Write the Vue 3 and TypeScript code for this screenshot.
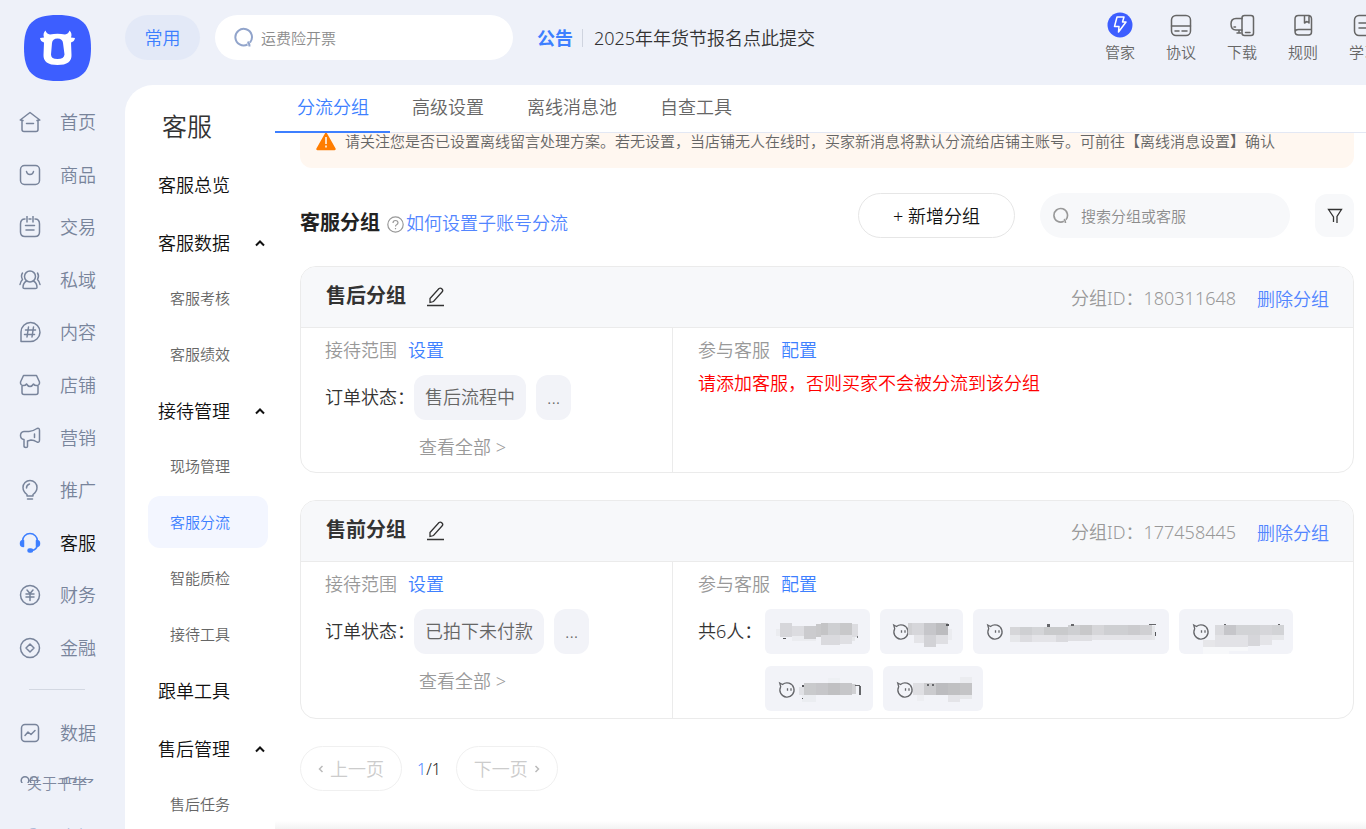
<script setup lang="ts">
import { ref } from 'vue'

interface NavItem { label: string; icon: string; active?: boolean }
interface SubGroup { label: string; collapsible?: boolean; children: string[] }
type Tile = [number, number, number, number, string]
interface Member { width: number; face: [number, number] | null; tiles: Tile[] }
interface Group { name: string; id: string; status: string; members: Member[] }

const navMain: NavItem[] = [
  { label: '首页', icon: '<path d="M4 9.5 1.2 9 11 1.5 20.800 9 18 9.500M3 9V18.500Q3 20.500 5 20.500H17Q19 20.500 19 18.500V9M7.500 12.500H14.500" />' },
  { label: '商品', icon: '<rect x="1.500" y="1.500" width="19" height="19" rx="4"/><path d="M7.500 7.500Q8 10.500 11 10.500T14.500 7.500"/>' },
  { label: '交易', icon: '<path d="M6 3Q1.500 3 1.500 8V16Q1.500 20.500 6 20.500H16Q20.500 20.500 20.500 16V8Q20.500 3 16 3M10 3H12M8 .5V6M14 .5V6M6.500 9.500H15.500M7 14H15" />' },
  { label: '私域', icon: '<circle cx="11" cy="7.500" r="5.500"/><path d="M7.500 12Q4 14 4 18.500 4 19.500 5.500 19.500H16.500Q18 19.500 18 18.500 18 14 14.500 12M3.500 4Q1.500 7 3.500 10.500 1.500 12.500 1 15.500M18.500 4Q20.500 7 18.500 10.500 20.500 12.500 21 15.500"/>' },
  { label: '内容', icon: '<path d="M2 20.500V11A9.500 9.500 0 1 1 11 20.500Z"/><path d="M9.500 6 8 16M14.500 6 13 16M6.500 9H16.500M5.500 13.500H15.500"/>' },
  { label: '店铺', icon: '<path d="M4.500 1.500H17.500L20.500 8Q20.800 11.500 17.500 11.500 15.500 11.500 14.500 10 13 12.500 11 12.500T7.500 10Q6.500 11.500 4.500 11.500 1.200 11.500 1.500 8ZM3 12V18.500Q3 20.500 5 20.500H17Q19 20.500 19 18.500V12"/>' },
  { label: '营销', icon: '<path d="M5 4.500H10Q13.500 4.500 18 1.500 20.500.5 20.500 3.500V13Q20.500 16 18 15 15 13 12 13L8.500 14V19.500Q8.500 20.500 7 20.500 5 20.500 5 19V12.500Q1.500 12 1.500 8.500T5 4.500ZM15.500 7V10.500"/>' },
  { label: '推广', icon: '<path d="M8 17V15.500Q4 12.500 4 8.500A7 7 0 0 1 18 8.500Q18 12.500 14 15.500V17ZM8.500 20H13.500M7.500 9Q7.500 6 10.500 5"/>' },
  { label: '客服', active: true, icon: '<path d="M3.500 9A7.500 7.500 0 0 1 18.500 9M18.500 13Q17.500 18 12.500 18.500" /><path fill="currentColor" d="M4.500 8.500V14.500Q1.500 14.500 1.500 11.500T4.500 8.500ZM17.500 8.500V14.500Q20.500 14.500 20.500 11.500T17.500 8.500Z"/><rect x="9" y="17" width="4.500" height="3" rx="1.500" fill="currentColor"/>' },
  { label: '财务', icon: '<circle cx="11" cy="11" r="9.500"/><path d="M8 6 11 9.500 14 6M7 10H15M7 13H15M11 9.500V16.500"/>' },
  { label: '金融', icon: '<circle cx="11" cy="11" r="9.500"/><path d="M11 7 15 11 11 15 7 11Z"/>' },
]
const navMore: NavItem[] = [
  { label: '数据', icon: '<rect x="2.500" y="2.500" width="17" height="17" rx="3.500"/><path d="M6 13.500 9 10 12 12.500 16 8.500"/>' },
  { label: '服务', icon: '<circle cx="6" cy="5.500" r="3.800"/><circle cx="15" cy="5.500" r="3.800"/><circle cx="6" cy="15" r="3.800"/><circle cx="15" cy="15" r="3.800"/>' },
]

const tools = [
  { label: '管家', icon: '<circle cx="13" cy="13" r="12.500" fill="#3d5eff" stroke="none"/><path stroke="#fff" d="M10 5H17L15.500 10H19L11.500 20 12 14.500H7.500Z"/>' },
  { label: '协议', icon: '<rect x="3.500" y="3.500" width="19" height="20" rx="4.500"/><path d="M3.500 14H22.500M7 19H11M14 19H19"/>' },
  { label: '下载', icon: '<rect x="13" y="3.500" width="11.500" height="20" rx="2.500"/><path d="M13 6.500H7Q2 6.500 2 12 2 18 7 18H13M8 21H12M10 18.500V21M16.500 20.500H21M5 15H6.500"/>' },
  { label: '规则', icon: '<path d="M5 19V7Q5 3.500 8.500 3.500H18Q21.500 3.500 21.500 7V20Q21.500 23 18.500 23H8.500Q5 23 5 19.500M5 20Q5 17.500 8.500 17.500H21.500M14.500 3.500V11L17 9.500 19 11V3.500"/>' },
  { label: '学习', icon: '<rect x="3.500" y="3.500" width="19" height="20" rx="4.500"/><path d="M8 11H18M8 16H18"/>' },
]

const menu: SubGroup[] = [
  { label: '客服总览', children: [] },
  { label: '客服数据', collapsible: true, children: ['客服考核', '客服绩效'] },
  { label: '接待管理', collapsible: true, children: ['现场管理', '客服分流', '智能质检', '接待工具'] },
  { label: '跟单工具', children: [] },
  { label: '售后管理', collapsible: true, children: ['售后任务'] },
]
const currentPage = ref('客服分流')
const tabs = ['分流分组', '高级设置', '离线消息池', '自查工具']
const currentTab = ref(tabs[0])

const groups: Group[] = [
  { name: '售后分组', id: '180311648', status: '售后流程中', members: [] },
  {
    name: '售前分组', id: '177458445', status: '已拍下未付款',
    members: [
      { width: 105, face: null, tiles: [
        [11, 20, 4, 7, '#ebecf0'], [15, 14, 12, 14, '#d6d6da'], [27, 17, 12, 10, '#dcdce0'], [27, 27, 24, 5, '#ebecf0'], [39, 17, 12, 13, '#cbcbce'], [51, 15, 5, 13, '#c8c8ca'],
        [56, 14, 7, 12, '#c4c4c6'], [63, 14, 12, 12, '#cecfd2'], [75, 14, 12, 12, '#c8c8ca'], [87, 15, 6, 13, '#dcdce0'],
        [56, 26, 19, 10, '#dadade'], [75, 26, 12, 9, '#dfdfe3'], [87, 28, 3, 4, '#e6e7ea'], [18, 29, 3, 1, '#55565a'], [92, 27, 1, 2, '#77787c'] ] },
      { width: 83, face: [21, 23], tiles: [
        [28, 14, 4, 12, '#d0d0d3'], [32, 14, 12, 12, '#d6d6da'], [44, 14, 12, 12, '#c6c6ca'], [56, 14, 12, 12, '#bcbcbf'],
        [68, 20, 4, 11, '#ebecf0'], [34, 26, 10, 8, '#e4e4e8'], [44, 26, 12, 12, '#d2d2d6'], [56, 26, 12, 9, '#dfdfe3'], [66, 15, 3, 2, '#55565a'] ] },
      { width: 196, face: [22, 23], tiles: [
        [37, 18, 10, 8, '#d6d6d9'], [47, 18, 12, 8, '#cecfd2'], [59, 18, 12, 8, '#d4d5d8'], [71, 18, 24, 8, '#c9cacc'], [95, 16, 12, 10, '#cecfd2'], [107, 16, 12, 10, '#c8c8ca'],
        [119, 16, 12, 10, '#d6d6d9'], [131, 16, 24, 10, '#cecfd2'], [155, 16, 12, 10, '#cbcbce'], [167, 16, 12, 10, '#d0d0d3'], [179, 17, 3, 14, '#e6e7ea'],
        [37, 26, 10, 7, '#e6e7ea'], [47, 26, 12, 7, '#dcdce0'], [59, 26, 24, 7, '#e4e4e8'], [83, 26, 12, 7, '#dadade'], [95, 26, 24, 6, '#dfdfe3'], [119, 26, 60, 5, '#e4e4e8'],
        [74, 15, 3, 3, '#66676b'], [98, 15, 3, 2, '#66676b'], [176, 15, 7, 1, '#66676b'], [182, 23, 1, 4, '#55565a'] ] },
      { width: 114, face: [22, 23], tiles: [
        [36, 16, 9, 10, '#dadade'], [45, 16, 12, 10, '#c6c6ca'], [57, 16, 24, 10, '#d2d3d6'], [81, 16, 12, 10, '#d6d6da'], [93, 16, 12, 10, '#d2d3d6'],
        [36, 26, 33, 12, '#e2e2e6'], [24, 31, 12, 7, '#e6e6e9'], [69, 26, 12, 11, '#d6d6da'], [81, 26, 12, 10, '#e4e4e8'], [93, 26, 12, 5, '#e6e7ea'],
        [24, 38, 26, 7, '#f7f8fa'], [50, 38, 19, 4, '#f7f8fa'], [45, 15, 2, 1, '#66676b'], [99, 15, 2, 1, '#66676b'] ] },
      { width: 108, face: [22, 24], tiles: [
        [34, 21, 5, 8, '#e0e1e5'], [39, 17, 12, 12, '#c9cacc'], [51, 17, 12, 12, '#c6c6c9'], [63, 17, 12, 12, '#c0c0c2'], [75, 17, 12, 12, '#c6c6c9'], [87, 18, 4, 10, '#d0d0d3'],
        [63, 12, 12, 5, '#eef0f4'], [37, 29, 14, 7, '#ebedf1'], [90, 19, 5, 1, '#66676b'], [94, 20, 2, 9, '#66676b'], [37, 19, 2, 2, '#55565a'], [37, 32, 1, 1, '#55565a'] ] },
      { width: 100, face: [22, 24], tiles: [
        [30, 17, 11, 12, '#dfdfe3'], [41, 17, 12, 12, '#cbcbce'], [53, 17, 12, 12, '#bcbcbf'], [65, 17, 12, 12, '#c0c0c2'], [77, 17, 12, 12, '#c4c4c6'],
        [77, 11, 12, 6, '#ebecf0'], [65, 29, 12, 7, '#e4e4e8'], [77, 29, 12, 4, '#e6e7ea'], [34, 29, 7, 6, '#edeef2'], [44, 18, 2, 2, '#66676b'], [49, 18, 2, 2, '#66676b'] ] },
    ],
  },
]
</script>

<template>
  <div class="app">
    <aside class="side">
      <a class="logo" href="#" aria-label="千牛">
        <svg viewBox="0 0 67 66" width="67" height="66">
          <path fill="#3d5eff" d="M33.500 0C58 0 67 9 67 33S58 66 33.500 66 0 57 0 33 9 0 33.500 0Z" />
          <path fill="#fff" fill-rule="evenodd" d="M21.500 15.500Q22.500 19 26 19.500 33.500 18 41 19.500 44.500 19 45.500 15.500 48.500 18.500 47 22.500L51 23Q50.500 26.500 47 27.500L47.500 40Q48 50 33.500 50T19.500 40L20 27.500Q16.500 26.500 16 23L20 22.500Q18.500 18.500 21.500 15.500ZM33.500 23.500Q28.500 23.500 28 28L27 39.500Q27 44 33.500 44T40.500 39.500L39 28Q38.500 23.500 33.500 23.500Z" />
        </svg>
      </a>
      <nav class="side-nav">
        <div class="nav-main">
          <a v-for="n in navMain" :key="n.label" href="#" class="nav-item" :class="{ active: n.active }">
            <svg class="line" viewBox="0 0 22 22" width="22" height="22" v-html="n.icon" />
            <span>{{ n.label }}</span>
          </a>
        </div>
        <hr class="nav-rule" />
        <a v-for="n in navMore" :key="n.label" href="#" class="nav-item more">
          <svg class="line" viewBox="0 0 22 22" width="22" height="22" v-html="n.icon" />
          <span>{{ n.label }}</span>
        </a>
      </nav>
      <footer class="side-foot">
        <a href="#">关于千牛</a>
        <small>Copyright</small>
      </footer>
    </aside>

    <div class="right">
      <header class="top">
        <button class="common" type="button">常用</button>
        <label class="search top-search">
          <svg viewBox="0 0 22 22" width="22" height="22"><path d="M14.500 17.500A8.300 8.300 0 1 1 17 15.500M14.500 15Q16.500 16 16.500 19.500" fill="none" stroke="#91a4cb" stroke-width="2" /></svg>
          <input type="text" placeholder="运费险开票" aria-label="搜索功能" />
        </label>
        <div class="notice"><b>公告</b><a href="#">2025年年货节报名点此提交</a></div>
        <nav class="tools">
          <a v-for="t in tools" :key="t.label" href="#">
            <svg class="line" viewBox="0 0 26 26" width="26" height="26" v-html="t.icon" />
            <span>{{ t.label }}</span>
          </a>
        </nav>
      </header>

      <div class="panel">
        <aside class="menu">
          <h1>客服</h1>
          <template v-for="g in menu" :key="g.label">
            <button type="button" class="menu-head">
              <span>{{ g.label }}</span>
              <svg v-if="g.collapsible" viewBox="0 0 10 8" width="10" height="8"><path d="M1 6.500 5 2.500 9 6.500" fill="none" stroke="#111" stroke-width="2" /></svg>
            </button>
            <ul v-if="g.children.length">
              <li v-for="c in g.children" :key="c">
                <a href="#" :class="{ active: c === currentPage }" @click.prevent="currentPage = c">{{ c }}</a>
              </li>
            </ul>
          </template>
        </aside>

        <main class="main">
          <div class="tabs" role="tablist">
            <button v-for="t in tabs" :key="t" type="button" role="tab" :aria-selected="t === currentTab" :class="{ active: t === currentTab }" @click="currentTab = t">{{ t }}</button>
          </div>
          <div class="scroll">
            <div class="banner">
              <svg viewBox="0 0 20 20" width="20" height="20"><path d="M10 3 18.500 18H1.500Z" fill="#ff7d00" stroke="#ff7d00" stroke-width="2.500" stroke-linejoin="round" /><path d="M10 6V13M10 14.500V16.500" stroke="#fff" stroke-width="1.500" /></svg>
              <span>请关注您是否已设置离线留言处理方案。若无设置，当店铺无人在线时，买家新消息将默认分流给店铺主账号。可前往【离线消息设置】确认</span>
            </div>

            <div class="bar">
              <h2>客服分组</h2>
              <svg class="help" viewBox="0 0 17 17" width="17" height="17"><circle cx="8.500" cy="8.500" r="7.700" /><path d="M6 7Q6 4.500 8.500 4.500T11 6.800Q11 8 9.500 8.800 8.500 9.300 8.500 10.500M8.500 12V13.200" /></svg>
              <a href="#" class="howto">如何设置子账号分流</a>
              <button type="button" class="add">+ 新增分组</button>
              <label class="search group-search">
                <svg viewBox="0 0 22 22" width="18" height="18"><path d="M14.500 17.500A8.300 8.300 0 1 1 17 15.500M14.500 15Q16.500 16 16.500 19.500" fill="none" stroke="#999" stroke-width="2" /></svg>
                <input type="text" placeholder="搜索分组或客服" aria-label="搜索分组或客服" />
              </label>
              <button type="button" class="filter" aria-label="筛选">
                <svg viewBox="0 0 16 16" width="16" height="16"><path d="M6.500 14V9L1.500 1.500H14.500L10 8.500V15" fill="none" stroke="#333" stroke-width="1.300" /></svg>
              </button>
            </div>

            <section v-for="g in groups" :key="g.id" class="card">
              <header>
                <h3>{{ g.name }}</h3>
                <button type="button" class="edit" aria-label="编辑">
                  <svg viewBox="0 0 20 22" width="20" height="22"><path d="M4 12.500 13 2.500Q14.500 1.500 16 3T16 6L7.500 15.500 4 16.500ZM1 19.500H18" fill="none" stroke="#333" stroke-width="1.300" /></svg>
                </button>
                <span class="gid">分组ID：{{ g.id }}</span>
                <a href="#">删除分组</a>
              </header>
              <div class="cols">
                <div class="range">
                  <p class="cap"><span>接待范围</span><a href="#">设置</a></p>
                  <div class="row">
                    <span class="key">订单状态：</span>
                    <div class="pills"><span class="pill">{{ g.status }}</span><span class="pill dots">...</span></div>
                  </div>
                  <a href="#" class="all">查看全部 &gt;</a>
                </div>
                <div class="staff">
                  <p class="cap"><span>参与客服</span><a href="#">配置</a></p>
                  <p v-if="!g.members.length" class="warn">请添加客服，否则买家不会被分流到该分组</p>
                  <div v-else class="row">
                    <span class="key count">共{{ g.members.length }}人：</span>
                    <div class="pills">
                      <svg v-for="(m, i) in g.members" :key="i" class="member" :viewBox="`0 0 ${m.width} 45`" :width="m.width" height="45">
                        <g v-if="m.face" :transform="`translate(${m.face[0]} ${m.face[1]})`" fill="none" stroke="#66676b" stroke-width="1.300">
                          <path d="M-4.500-5.500A7.100 7.100 0 1 1-6.300-3.300L-7.300-7Z" />
                          <path d="M.5-1.800V.8M4-1.800V.8" />
                        </g>
                        <rect v-for="(t, k) in m.tiles" :key="k" :x="t[0]" :y="t[1]" :width="t[2]" :height="t[3]" :fill="t[4]" shape-rendering="crispEdges" />
                      </svg>
                    </div>
                  </div>
                </div>
              </div>
            </section>

            <div class="pager">
              <button type="button" disabled><svg viewBox="0 0 6 8" width="6" height="8"><path d="M4.500 1 1.500 4 4.500 7" /></svg>上一页</button>
              <span><i>1</i>/1</span>
              <button type="button" disabled>下一页<svg viewBox="0 0 6 8" width="6" height="8"><path d="M1.500 1 4.500 4 1.500 7" /></svg></button>
            </div>
          </div>
          <div class="fade"></div>
        </main>
      </div>
    </div>
  </div>
</template>

<style>
body { margin: 0; }
</style>

<style scoped>
.app {
  display: grid;
  grid-template-columns: 125px minmax(0, 1fr);
  height: 100vh;
  overflow: hidden;
  background: #eef1f9;
  color: #333;
  font: 350 18px/26px "Noto Sans", "Noto Sans CJK SC", sans-serif;
}
* { box-sizing: border-box; }
a { color: inherit; text-decoration: none; }
button { font: inherit; color: inherit; background: none; border: 0; padding: 0; cursor: pointer; }
input { font: inherit; color: inherit; background: none; border: 0; padding: 0; outline: 0; min-width: 0; flex: 1; }
input::placeholder { color: #8c8c8c; opacity: 1; }
h1, h2, h3, p, ul { margin: 0; padding: 0; list-style: none; }
svg { flex: none; display: block; }
.line { fill: none; stroke: currentColor; stroke-width: 1.5; stroke-linejoin: round; stroke-linecap: round; }

.side { display: flex; flex-direction: column; min-height: 0; }
.logo { margin: 15px 0 15px 24px; }
.side-nav { flex: 1; min-height: 0; overflow: hidden; }
.nav-main { display: flex; flex-direction: column; min-height: 578px; }
.nav-item { flex: 1; display: flex; align-items: center; gap: 19px; padding-left: 19px; color: #78849b; }
.nav-item.active { color: #111; }
.nav-item.active svg { color: #3d7fff; }
.nav-item.more { height: 53px; }
.nav-rule { width: 56px; height: 1px; margin: 15px 0 16px 29px; border: 0; background: #d3d8e2; }
.side-foot { display: flex; flex-direction: column; height: 46px; padding-left: 27px; font-size: 15px; color: #7f89a0; }
.side-foot a { margin-top: -13px; }
.side-foot small { margin-top: 24px; font-size: 15px; color: #a3b3d3; }

.right { display: flex; flex-direction: column; min-width: 0; min-height: 0; overflow: hidden; }
.top { display: flex; align-items: center; height: 85px; padding-bottom: 10px; flex: none; }
.common { width: 75px; height: 45px; border-radius: 23px; background: #e3e9f7; color: #3d7fff; }
.search { display: flex; align-items: center; height: 45px; border-radius: 23px; font-size: 15px; }
.top-search { width: 298px; margin-left: 15px; padding: 0 18px; gap: 6px; background: #fff; }
.notice { display: flex; align-items: center; margin-left: 24px; white-space: nowrap; }
.notice b { padding-right: 9px; color: #3d7fff; font-weight: 700; }
.notice a { padding-left: 11px; border-left: 1px solid #cfd4df; line-height: 18px; }
.tools { display: flex; gap: 31px; margin: 0 -13px 0 auto; font-size: 15px; color: #666; }
.tools a { width: 30px; display: flex; flex-direction: column; align-items: center; white-space: nowrap; gap: 2px; line-height: 24px; }

.panel { flex: 1; display: grid; grid-template-columns: 150px minmax(0, 1fr); min-height: 0; background: #fff; border-radius: 28px 0 0 0; overflow: hidden; }
.menu { padding: 21px 7px 0 23px; overflow: hidden; }
.menu h1 { margin-left: 14px; font-size: 25px; line-height: 40px; font-weight: 350; }
.menu-head { display: flex; align-items: center; justify-content: space-between; width: 100%; height: 54px; margin-top: 4px; padding: 0 3px 0 10px; color: #111; }
.menu h1 + .menu-head { margin-top: 12px; }
.menu ul { display: grid; gap: 4px; margin-top: 2px; }
.menu li a { display: block; padding-left: 22px; line-height: 52px; border-radius: 12px; font-size: 15px; color: #666; }
.menu li a.active { background: #f3f6ff; color: #3d7fff; }

.main { display: flex; flex-direction: column; min-width: 0; min-height: 0; }
.tabs { display: flex; flex: none; height: 48px; box-shadow: inset 0 -1px #e3e8f4; color: #666; }
.tabs button { padding: 0 21px 2px 22px; border-bottom: 2px solid transparent; white-space: nowrap; }
.tabs button.active { color: #3d7fff; border-color: #3d7fff; }
.scroll { flex: 1; min-height: 0; overflow: hidden; padding: 0 12px 0 25px; }
.banner { display: flex; align-items: center; gap: 9px; height: 54px; margin-top: -19px; padding: 0 16px 1px; border-radius: 12px; background: #fff7f0; font-size: 15px; color: #666; white-space: nowrap; }
.bar { display: flex; align-items: center; height: 45px; margin: 25px 0 28px; }
.bar h2 { font-size: 20px; font-weight: 700; color: #222; padding-top: 14px; }
.help { margin: 18px 2px 0 7px; fill: none; stroke: #999; stroke-width: 1.2; }
.howto { padding-top: 14px; color: #5285ff; white-space: nowrap; }
.add { width: 157px; height: 45px; margin-left: auto; border: 1px solid #e6e6e6; border-radius: 23px; color: #111; }
.group-search { width: 250px; margin: 0 25px; padding: 0 12px; gap: 11px; background: #f7f8fa; }
.filter { display: grid; place-items: center; width: 39px; height: 43px; border-radius: 12px; background: #f7f8fa; }

.card { border: 1px solid #ebebeb; border-radius: 16px; overflow: hidden; margin-bottom: 27px; }
.card header { display: flex; align-items: center; height: 61px; padding: 0 24px 0 25px; border-bottom: 1px solid #ebebeb; background: #f7f8fa; }
.card h3 { font-size: 20px; font-weight: 700; padding-bottom: 2px; }
.edit { margin-left: 20px; }
.gid { margin-left: auto; padding: 2px 21px 0 0; color: #999; }
.card header a { padding-top: 4px; color: #5285ff; }
.cols { display: grid; grid-template-columns: 372px minmax(0, 1fr); }
.range { padding: 9px 10px 12px 24px; border-right: 1px solid #ebebeb; }
.staff { padding: 9px 25px 7px; }
.cap { display: flex; gap: 11px; color: #999; }
.cap a { color: #3d7fff; }
.row { display: flex; margin-top: 12px; }
.key { flex: none; width: 89px; line-height: 45px; white-space: nowrap; }
.count { width: 67px; }
.pills { display: flex; flex-wrap: wrap; gap: 12px 10px; min-width: 0; }
.pill { height: 45px; padding: 0 11px; border-radius: 12px; background: #f2f3f8; color: #666; line-height: 45px; }
.member { border-radius: 6px; background: #f2f3f8; }
.all { display: block; width: max-content; margin: 14px 0 0 94px; color: #999; }
.warn { margin-top: 7px; color: #f00; }

.pager { display: flex; align-items: center; gap: 15px; font-size: 18px; }
.pager span { font-size: 16px; color: #222; }
.pager i { font-style: normal; color: #5285ff; }
.pager button { display: flex; align-items: center; justify-content: center; gap: 6px; width: 102px; height: 45px; border: 1px solid #f0f0f0; border-radius: 23px; color: #ccc; }
.pager svg { fill: none; stroke: #bbb; stroke-width: 1.5; }
.fade { flex: none; height: 8px; background: linear-gradient(#fff, #f3f3f3); }
</style>
